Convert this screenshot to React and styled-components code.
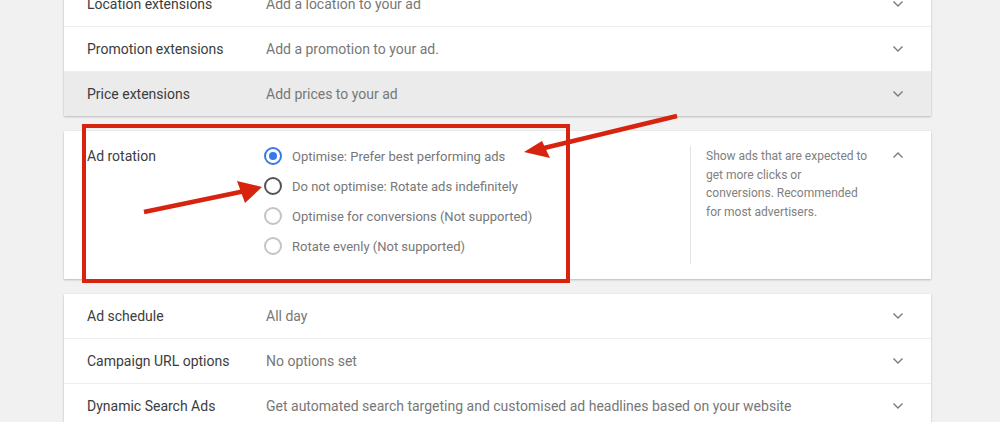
import React from "react";
import styled, { createGlobalStyle } from "styled-components";

const Global = createGlobalStyle`
  html, body { margin: 0; padding: 0; background: #f1f1f1; overflow: hidden; }
  body { font-family: Roboto, "Noto Sans", Arial, sans-serif; }
`;

const Page = styled.div`
  position: relative;
  width: 1000px;
  height: 422px;
  overflow: hidden;
  background: #f1f1f1;
`;

const Column = styled.div`
  display: flex;
  flex-direction: column;
  gap: 15px;
  margin-top: -18px;
  padding-left: 64px;
  width: 867px;
`;

const Card = styled.div`
  background: #fff;
  box-shadow: 0 1px 2px rgba(0, 0, 0, 0.22), 0 0 1px rgba(0, 0, 0, 0.08);
  display: flex;
  flex-direction: column;
`;

const Row = styled.div`
  display: grid;
  grid-template-columns: 179px 1fr 40px;
  align-items: center;
  height: 44px;
  padding-left: 23px;
  padding-right: 24px;
  background: ${(p) => (p.$active ? "#ebebeb" : "#fff")};
  border-top: ${(p) => (p.$first ? "none" : "1px solid #eeeeee")};
  font-size: 14px;
`;

const Label = styled.div`
  color: #3c3c3c;
`;

const Value = styled.div`
  color: #777;
  white-space: nowrap;
`;

const ChevronBox = styled.div`
  display: flex;
  justify-content: flex-end;
  align-items: center;
  padding-right: 3px;
`;

const Chevron = ({ up }) => (
  <svg width="12" height="8" viewBox="0 0 12 8">
    <polyline
      points={up ? "1.5,6.5 6,2 10.5,6.5" : "1.5,1.5 6,6 10.5,1.5"}
      fill="none"
      stroke="#7a7a7a"
      strokeWidth="1.4"
    />
  </svg>
);

const RotationCard = styled(Card)`
  flex-direction: row;
  height: 148px;
  padding: 15px 24px 15px 23px;
  box-sizing: border-box;
  font-size: 14px;
`;

const RotationLabel = styled(Label)`
  width: 177px;
  padding-top: 2px;
`;

const Options = styled.div`
  display: flex;
  flex-direction: column;
  gap: 12px;
  width: 426px;
  padding-top: 1px;
`;

const Option = styled.div`
  display: flex;
  align-items: center;
  gap: 10px;
  height: 18px;
  color: #777;
  font-size: 13px;
`;

const Radio = styled.span`
  box-sizing: border-box;
  width: 18px;
  height: 18px;
  border-radius: 50%;
  flex: none;
  border: 2px solid
    ${(p) =>
      p.$state === "checked" ? "#3b78e7" : p.$state === "hover" ? "#555" : "#c4c4c4"};
  display: flex;
  align-items: center;
  justify-content: center;
  &::after {
    content: "";
    width: 8px;
    height: 8px;
    border-radius: 50%;
    background: ${(p) => (p.$state === "checked" ? "#3b78e7" : "transparent")};
  }
`;

const Help = styled.div`
  border-left: 1px solid #e3e3e3;
  height: 118px;
  padding-left: 15px;
  width: 163px;
  color: #808080;
  font-size: 12px;
  line-height: 18.7px;
`;

const HelpText = styled.div`
  margin-top: 1px;
`;

const UpBox = styled.div`
  flex: 1;
  display: flex;
  justify-content: flex-end;
  padding-right: 3px;
  padding-top: 5px;
`;

const Overlay = styled.svg`
  position: absolute;
  left: 0;
  top: 0;
  pointer-events: none;
`;

const topRows = [
  ["Location extensions", "Add a location to your ad"],
  ["Promotion extensions", "Add a promotion to your ad."],
  ["Price extensions", "Add prices to your ad", true],
];

const bottomRows = [
  ["Ad schedule", "All day"],
  ["Campaign URL options", "No options set"],
  ["Dynamic Search Ads", "Get automated search targeting and customised ad headlines based on your website"],
];

const options = [
  ["Optimise: Prefer best performing ads", "checked"],
  ["Do not optimise: Rotate ads indefinitely", "hover"],
  ["Optimise for conversions (Not supported)", "off"],
  ["Rotate evenly (Not supported)", "off"],
];

export default function App() {
  return (
    <Page>
      <Global />
      <Column>
        <Card>
          {topRows.map(([l, v, a], i) => (
            <Row key={l} $first={i === 0} $active={a}>
              <Label>{l}</Label>
              <Value>{v}</Value>
              <ChevronBox>
                <Chevron />
              </ChevronBox>
            </Row>
          ))}
        </Card>
        <RotationCard>
          <RotationLabel>Ad rotation</RotationLabel>
          <Options>
            {options.map(([t, s]) => (
              <Option key={t}>
                <Radio $state={s} />
                {t}
              </Option>
            ))}
          </Options>
          <Help>
            <HelpText>
              Show ads that are expected to get more clicks or conversions. Recommended for most
              advertisers.
            </HelpText>
          </Help>
          <UpBox>
            <Chevron up />
          </UpBox>
        </RotationCard>
        <Card>
          {bottomRows.map(([l, v], i) => (
            <Row key={l} $first={i === 0}>
              <Label>{l}</Label>
              <Value>{v}</Value>
              <ChevronBox>
                <Chevron />
              </ChevronBox>
            </Row>
          ))}
        </Card>
      </Column>
      <Overlay width="1000" height="422" viewBox="0 0 1000 422">
        <rect x="84" y="126" width="484" height="155" fill="none" stroke="#d8230f" strokeWidth="4" />
        <line x1="677" y1="116" x2="540" y2="149" stroke="#d8230f" strokeWidth="4.5" />
        <polygon points="524,152 542,141 550,158" fill="#d8230f" />
        <line x1="144" y1="212" x2="245" y2="191" stroke="#d8230f" strokeWidth="4.5" />
        <polygon points="262,187 237,181 245,203" fill="#d8230f" />
      </Overlay>
    </Page>
  );
}
